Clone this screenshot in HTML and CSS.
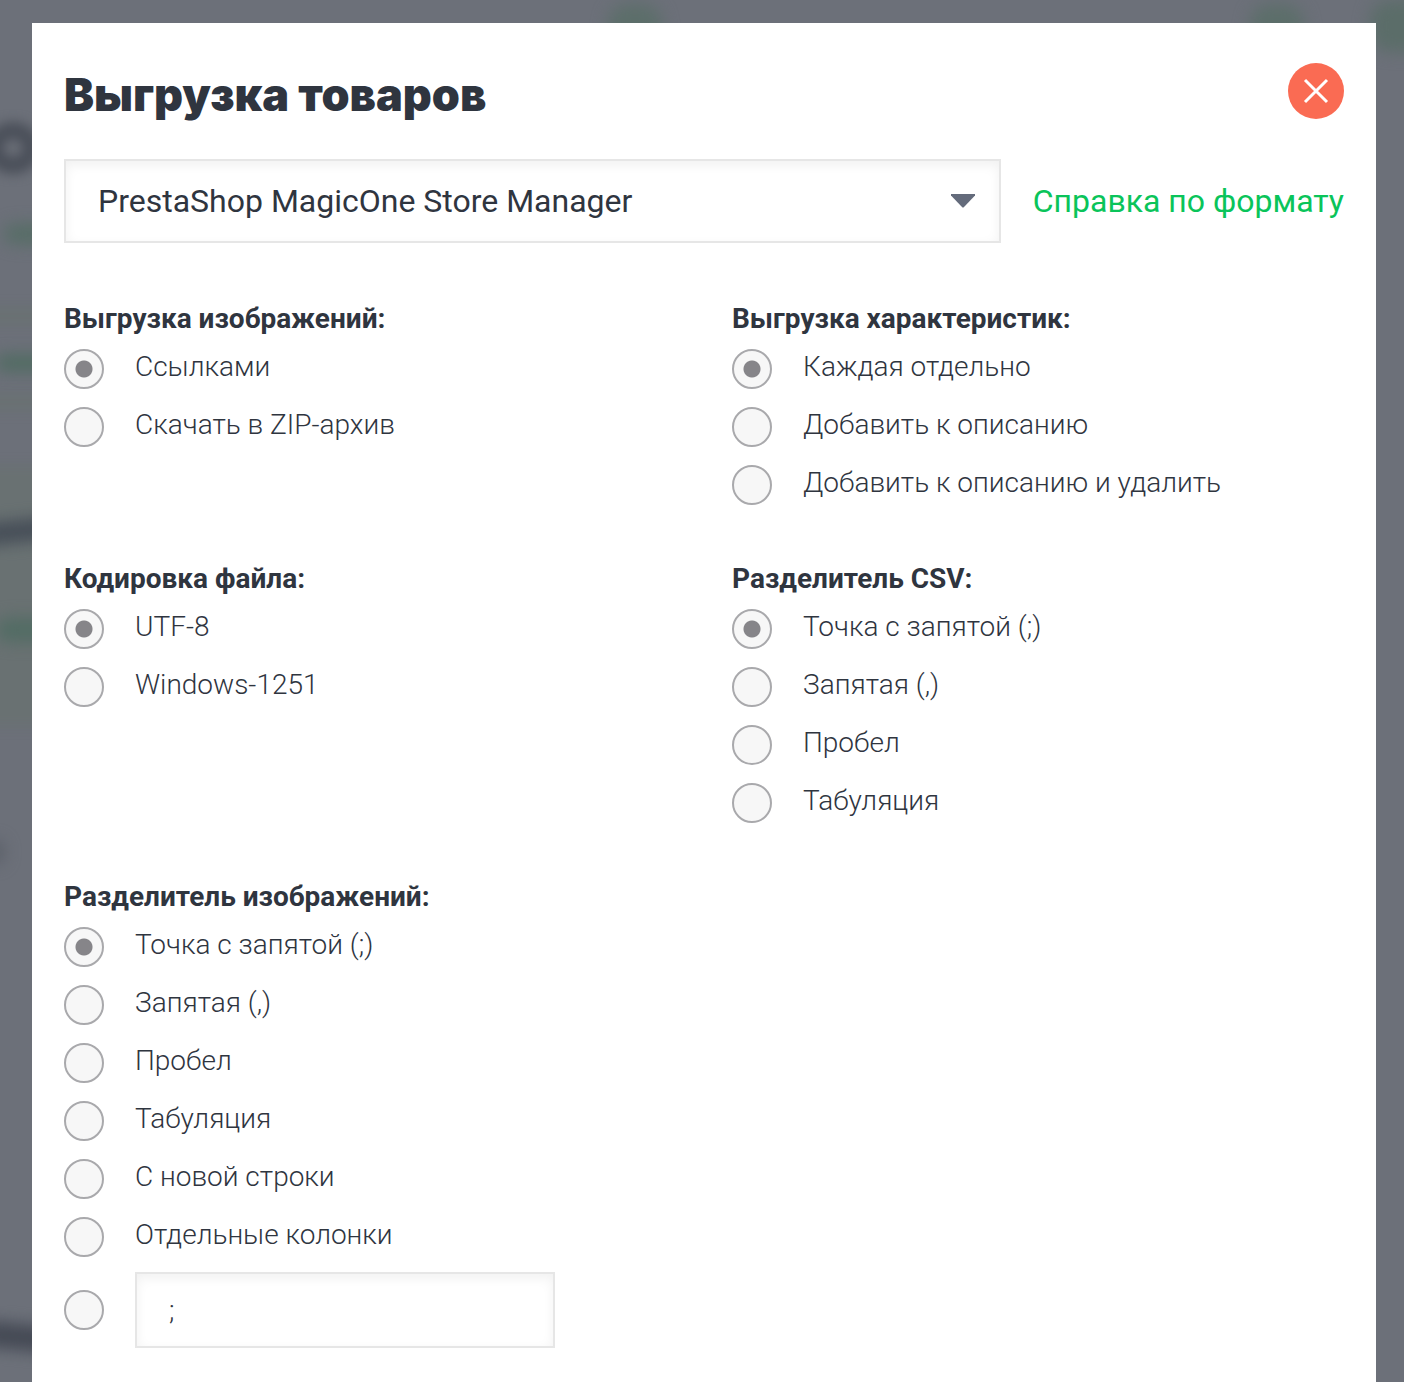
FILE: index.html
```html
<!DOCTYPE html>
<html lang="ru">
<head>
  <meta charset="utf-8">
  <title>Выгрузка товаров</title>
  <link rel="stylesheet" href="styles.css">
</head>
<body>
  <!-- blurred page behind the popup -->
  <div class="backdrop" aria-hidden="true">
    <span class="band band-line"></span>
    <span class="band band-line-low"></span>
    <span class="band band-block"></span>
    <span class="spot spot-circle-first"></span>
    <span class="spot spot-circle-second"></span>
    <span class="spot spot-button"></span>
    <span class="spot spot-ring"></span>
    <span class="spot spot-link"></span>
    <span class="spot spot-link-mid"></span>
    <span class="spot spot-title"></span>
    <span class="spot spot-link-low"></span>
    <span class="spot spot-dot"></span>
    <span class="spot spot-footer"></span>
  </div>

  <div class="overlay">
    <main class="modal">
      <div class="modal-header">
        <h1>Выгрузка товаров</h1>
        <button type="button" class="close" aria-label="Закрыть">
          <svg width="26" height="26" viewBox="0 0 26 26"><path d="M2 2 L24 24 M24 2 L2 24" stroke="#fff" stroke-width="3" fill="none"/></svg>
        </button>
      </div>

      <form>
        <div class="format">
          <div class="select">
            <select name="format" aria-label="Формат выгрузки">
              <option>PrestaShop MagicOne Store Manager</option>
            </select>
            <svg class="arrow" width="24" height="14" viewBox="0 0 24 14"><path d="M0 0 H24 V1.5 L13 13 Q12 14 11 13 L0 1.5 Z" fill="#646b7b"/></svg>
          </div>
          <a href="#">Справка по формату</a>
        </div>

        <div class="groups">
          <fieldset>
            <legend>Выгрузка изображений:</legend>
            <div class="options">
              <div class="option"><input type="radio" id="img-links" name="images" checked><label for="img-links">Ссылками</label></div>
              <div class="option"><input type="radio" id="img-zip" name="images"><label for="img-zip">Скачать в ZIP-архив</label></div>
            </div>
          </fieldset>

          <fieldset>
            <legend>Выгрузка характеристик:</legend>
            <div class="options">
              <div class="option"><input type="radio" id="attr-each" name="attrs" checked><label for="attr-each">Каждая отдельно</label></div>
              <div class="option"><input type="radio" id="attr-add" name="attrs"><label for="attr-add">Добавить к описанию</label></div>
              <div class="option"><input type="radio" id="attr-move" name="attrs"><label for="attr-move">Добавить к описанию и удалить</label></div>
            </div>
          </fieldset>

          <fieldset>
            <legend>Кодировка файла:</legend>
            <div class="options">
              <div class="option"><input type="radio" id="enc-utf" name="encoding" checked><label for="enc-utf">UTF-8</label></div>
              <div class="option"><input type="radio" id="enc-win" name="encoding"><label for="enc-win">Windows-1251</label></div>
            </div>
          </fieldset>

          <fieldset>
            <legend>Разделитель CSV:</legend>
            <div class="options">
              <div class="option"><input type="radio" id="csv-semi" name="csv" checked><label for="csv-semi">Точка с запятой (;)</label></div>
              <div class="option"><input type="radio" id="csv-comma" name="csv"><label for="csv-comma">Запятая (,)</label></div>
              <div class="option"><input type="radio" id="csv-space" name="csv"><label for="csv-space">Пробел</label></div>
              <div class="option"><input type="radio" id="csv-tab" name="csv"><label for="csv-tab">Табуляция</label></div>
            </div>
          </fieldset>

          <fieldset>
            <legend>Разделитель изображений:</legend>
            <div class="options">
              <div class="option"><input type="radio" id="sep-semi" name="sep" checked><label for="sep-semi">Точка с запятой (;)</label></div>
              <div class="option"><input type="radio" id="sep-comma" name="sep"><label for="sep-comma">Запятая (,)</label></div>
              <div class="option"><input type="radio" id="sep-space" name="sep"><label for="sep-space">Пробел</label></div>
              <div class="option"><input type="radio" id="sep-tab" name="sep"><label for="sep-tab">Табуляция</label></div>
              <div class="option"><input type="radio" id="sep-line" name="sep"><label for="sep-line">С новой строки</label></div>
              <div class="option"><input type="radio" id="sep-cols" name="sep"><label for="sep-cols">Отдельные колонки</label></div>
            </div>
            <div class="custom">
              <input type="radio" name="sep" aria-label="Свой разделитель">
              <input type="text" name="sep-custom" value=";" aria-label="Символ разделителя">
            </div>
          </fieldset>
        </div>
      </form>
    </main>
  </div>
</body>
</html>
```

FILE: styles.css
```css
* {
  box-sizing: border-box;
}

body {
  position: relative;
  margin: 0;
  background-color: #6c7079;
  color: #2f353f;
  font-family: Roboto, "Liberation Sans", sans-serif;
  font-size: 28px;
}

/* page behind the popup */
.backdrop {
  position: absolute;
  inset: 0;
  overflow: hidden;
}

.band,
.spot {
  position: absolute;
}

.band {
  left: -20px;
  right: 50%;
  filter: blur(6px);
  background-color: #697172;
}

.band-line {
  top: 308px;
  height: 16px;
}

.band-line-low {
  top: 394px;
  height: 16px;
}

.band-block {
  top: 466px;
  height: 260px;
}

.spot {
  filter: blur(8px);
  border-radius: 20px;
  background-color: #566d66;
}

.spot-circle-first {
  left: 608px;
  top: 4px;
  width: 54px;
  height: 54px;
  background-color: #5c6e6a;
}

.spot-circle-second {
  left: 1250px;
  top: 4px;
  width: 54px;
  height: 54px;
  background-color: #5c6e6a;
}

.spot-button {
  left: 1370px;
  top: 0;
  width: 80px;
  height: 52px;
  background-color: #5b6d69;
}

.spot-ring {
  left: -14px;
  top: 122px;
  width: 54px;
  height: 52px;
  border: 17px solid #4a4f59;
  border-radius: 50%;
  background-color: transparent;
  filter: blur(6px);
}

.spot-link {
  left: 4px;
  top: 224px;
  width: 60px;
  height: 20px;
}

.spot-link-mid {
  left: -4px;
  top: 355px;
  width: 80px;
  height: 16px;
  background-color: #4e6b60;
}

.spot-title {
  left: -20px;
  top: 520px;
  width: 80px;
  height: 22px;
  background-color: #454d57;
  transform: rotate(-6deg);
}

.spot-link-low {
  left: -4px;
  top: 618px;
  width: 80px;
  height: 24px;
  background-color: #526c64;
}

.spot-dot {
  left: -16px;
  top: 840px;
  width: 20px;
  height: 24px;
  background-color: #5a5f68;
}

.spot-footer {
  left: -20px;
  top: 1324px;
  width: 80px;
  height: 26px;
  background-color: #444954;
  transform: rotate(6deg);
}

/* popup */
.overlay {
  position: relative;
  display: flex;
  min-height: 100vh;
  padding: 23px 28px 0 32px;
}

.modal {
  flex: 1;
  padding: 40px 32px 32px;
  background-color: #fff;
}

.modal-header {
  display: flex;
  align-items: center;
  justify-content: space-between;
  margin-bottom: 40px;
}

h1 {
  margin: 0;
  padding-top: 8px;
  font-family: Inter, Roboto, sans-serif;
  font-size: 45px;
  font-weight: 900;
  line-height: 48px;
}

.close {
  display: flex;
  align-items: center;
  justify-content: center;
  width: 56px;
  height: 56px;
  padding: 0;
  border: none;
  border-radius: 50%;
  background-color: #fa6b53;
  cursor: pointer;
}

.format {
  display: flex;
  align-items: center;
  gap: 32px;
  margin-bottom: 58px;
  font-size: 32px;
}

.format a {
  color: #0ac45a;
  text-decoration: none;
}

.select {
  position: relative;
  flex: 1;
}

select,
input[type="text"] {
  display: block;
  padding: 0 32px;
  border: 2px solid #e6e6e6;
  border-radius: 0;
  background-color: #fff;
  box-shadow: inset 0 4px 12px rgba(0, 0, 0, 0.06);
  color: inherit;
  font: inherit;
}

select {
  width: 100%;
  height: 84px;
  appearance: none;
}

.arrow {
  position: absolute;
  top: 35px;
  right: 26px;
  pointer-events: none;
}

.groups {
  display: grid;
  grid-template-columns: 1fr 1fr;
  gap: 56px;
}

fieldset {
  min-width: 0;
  margin: 0;
  padding: 0;
  border: none;
}

legend {
  margin-bottom: 12px;
  padding: 0;
  font-weight: 700;
  line-height: 36px;
}

.options {
  display: flex;
  flex-direction: column;
  gap: 18px;
}

.option,
.custom {
  display: flex;
  gap: 31px;
  font-weight: 300;
}

.option label {
  line-height: 36px;
}

.custom {
  align-items: center;
  margin-top: 15px;
}

input[type="radio"] {
  flex: none;
  width: 40px;
  height: 40px;
  margin: 0;
  border: 2px solid #a9a9ac;
  border-radius: 50%;
  background-color: #f7f7f7;
  appearance: none;
}

input[type="radio"]:checked {
  background-image: radial-gradient(circle, #868589 8px, transparent 9px);
}

input[type="text"] {
  width: 420px;
  height: 76px;
}

@media screen and (max-width: 900px) {
  .format {
    flex-direction: column;
    align-items: stretch;
  }

  .groups {
    grid-template-columns: 1fr;
  }

  input[type="text"] {
    width: 100%;
  }
}
```
